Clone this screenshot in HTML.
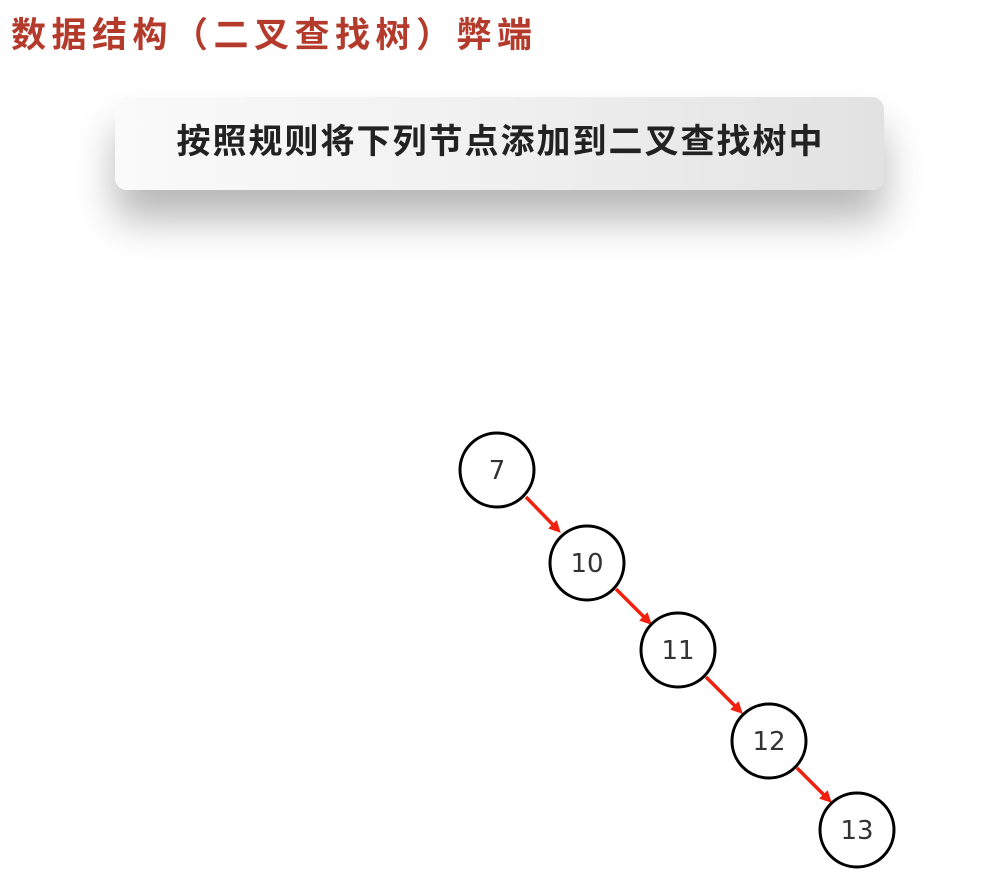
<!DOCTYPE html>
<html><head><meta charset="utf-8"><style>
html,body{margin:0;padding:0;background:#fff;width:988px;height:882px;overflow:hidden;position:relative}
.t{position:absolute;left:11px;top:14px;font:bold 35px/44px "Liberation Sans","Noto Sans CJK SC",sans-serif;color:#b43a2b;letter-spacing:5.5px;white-space:nowrap}
.box{position:absolute;left:115px;top:97px;width:769px;height:93px;border-radius:12px;background:linear-gradient(90deg,#fafafa 0%,#f0f0f0 50%,#e2e2e2 100%);box-shadow:0 30px 40px rgba(0,0,0,0.28)}
.box div{position:absolute;left:0;right:0;top:22px;text-align:center;font:bold 34px/46px "Liberation Sans","Noto Sans CJK SC",sans-serif;color:#222;letter-spacing:2px;padding-left:2px}
svg{position:absolute;left:0;top:0}
</style></head><body>
<div class="t">数据结构（二叉查找树）弊端</div>
<div class="box"><div>按照规则将下列节点添加到二叉查找树中</div></div>
<svg width="988" height="882">
<defs><marker id="a" markerWidth="12" markerHeight="12" refX="8" refY="6" orient="auto" markerUnits="userSpaceOnUse" viewBox="0 0 12 12"><path d="M0,0 L12,6 L0,12 z" fill="#f0220f"/></marker></defs>
<g stroke="#f0220f" stroke-width="3.5" fill="none">
<line x1="526" y1="497" x2="558" y2="530" marker-end="url(#a)" />
<line x1="616" y1="589" x2="649" y2="622" marker-end="url(#a)" />
<line x1="706" y1="677" x2="740" y2="711" marker-end="url(#a)" />
<line x1="797" y1="768" x2="829" y2="800" marker-end="url(#a)" />
</g>
<g stroke="#000" stroke-width="3" fill="#fff">
<circle cx="497" cy="470" r="37"/><circle cx="587" cy="563" r="37"/><circle cx="678" cy="650" r="37"/><circle cx="769" cy="741" r="37"/><circle cx="857" cy="830" r="37"/>
</g>
<g font-family="DejaVu Sans,Liberation Sans,sans-serif" font-size="26" fill="#333" text-anchor="middle">
<text x="497" y="479">7</text><text x="587" y="572">10</text><text x="678" y="659">11</text><text x="769" y="750">12</text><text x="857" y="839">13</text>
</g>
</svg>
</body></html>
